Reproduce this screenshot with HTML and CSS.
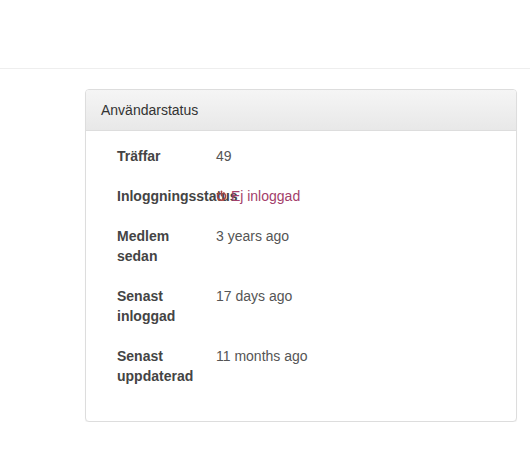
FILE: index.html
```html
<!DOCTYPE html>
<html lang="sv">

<head>
    <meta charset="UTF-8">
    <meta name="viewport" content="width=device-width, initial-scale=1.0">
    <title>Användarstatus</title>
    <link rel="stylesheet" href="styles.css">
</head>

<body>
    <div class="topbar"></div>

    <div class="content">
        <div class="panel">
            <div class="panel-heading">Användarstatus</div>
            <div class="panel-body">
                <dl class="status-list">
                    <div class="status-row">
                        <dt>Träffar</dt>
                        <dd>49</dd>
                    </div>
                    <div class="status-row">
                        <dt>Inloggningsstatus</dt>
                        <dd class="text-offline">
                            <svg class="icon-off" viewBox="0 0 12 12" width="11" height="12">
                                <path d="M3.5 2.6 A4.4 4.4 0 1 0 8.5 2.6" fill="none" stroke="currentColor" stroke-width="1.7" stroke-linecap="round" />
                                <line x1="6" y1="0.9" x2="6" y2="5.6" stroke="currentColor" stroke-width="1.7" stroke-linecap="round" />
                            </svg>
                            Ej inloggad
                        </dd>
                    </div>
                    <div class="status-row">
                        <dt>Medlem sedan</dt>
                        <dd>3 years ago</dd>
                    </div>
                    <div class="status-row">
                        <dt>Senast inloggad</dt>
                        <dd>17 days ago</dd>
                    </div>
                    <div class="status-row">
                        <dt>Senast uppdaterad</dt>
                        <dd>11 months ago</dd>
                    </div>
                </dl>
            </div>
        </div>
    </div>
</body>

</html>
```

FILE: styles.css
```css
body {
    font-family: "Liberation Sans", Arial, sans-serif;
    font-size: 14px;
    line-height: 20px;
    color: #333;
    background-color: #fff;
    margin: 0;
    padding: 0;
}

.topbar {
    height: 68px;
    border-bottom: 1px solid #eee;
}

.content {
    padding: 20px 13px 0 85px;
}

.panel {
    background-color: #fff;
    border: 1px solid #ddd;
    border-radius: 4px;
    box-shadow: 0 1px 1px rgba(0, 0, 0, 0.05);
}

.panel-heading {
    padding: 10px 15px;
    color: #333;
    background-image: linear-gradient(to bottom, #f5f5f5 0%, #e8e8e8 100%);
    border-bottom: 1px solid #ddd;
    border-radius: 3px 3px 0 0;
}

.panel-body {
    padding: 15px 15px 15px 31px;
}

.status-list {
    margin: 0;
}

.status-row {
    display: flex;
    margin-bottom: 20px;
}

.status-row dt {
    width: 90px;
    margin-right: 9px;
    flex-shrink: 0;
    font-weight: bold;
    color: #444;
}

.status-row dd {
    margin: 0;
    color: #555;
}

.status-row dd.text-offline {
    color: #a3406a;
}

.icon-off {
    vertical-align: -1px;
    color: #a94442;
}
```
